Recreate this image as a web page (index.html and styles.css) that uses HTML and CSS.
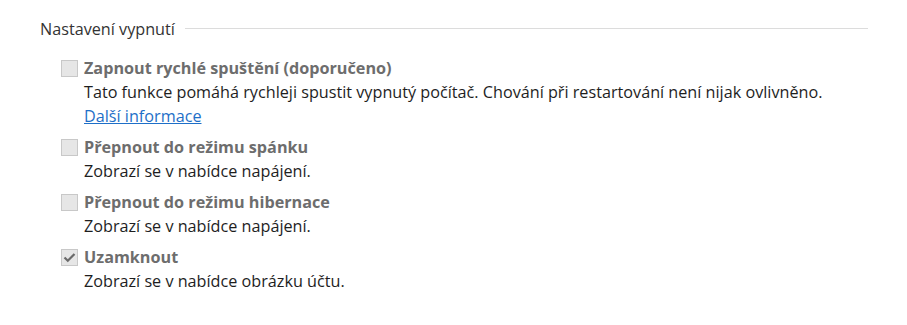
FILE: index.html
```html
<!DOCTYPE html>
<html lang="cs">
<head>
    <meta charset="UTF-8">
    <title>Nastavení vypnutí</title>
    <link rel="stylesheet" href="styles.css">
</head>
<body>
    <div class="group">
        <div class="group-head">
            <span class="group-title">Nastavení vypnutí</span>
            <span class="group-rule"></span>
        </div>

        <div class="option">
            <span class="box"></span>
            <div class="option-text">
                <div class="option-label">Zapnout rychlé spuštění (doporučeno)</div>
                <div class="option-desc">Tato funkce pomáhá rychleji spustit vypnutý počítač. Chování při restartování není nijak ovlivněno.</div>
                <a class="option-link" href="#">Další informace</a>
            </div>
        </div>

        <div class="option">
            <span class="box"></span>
            <div class="option-text">
                <div class="option-label">Přepnout do režimu spánku</div>
                <div class="option-desc">Zobrazí se v nabídce napájení.</div>
            </div>
        </div>

        <div class="option">
            <span class="box"></span>
            <div class="option-text">
                <div class="option-label">Přepnout do režimu hibernace</div>
                <div class="option-desc">Zobrazí se v nabídce napájení.</div>
            </div>
        </div>

        <div class="option">
            <span class="box checked">
                <svg width="13" height="11" viewBox="0 0 13 11">
                    <path d="M1.5 5.5 L4.8 8.8 L11.5 2" fill="none" stroke="#6a6a6a" stroke-width="2.2"/>
                </svg>
            </span>
            <div class="option-text">
                <div class="option-label">Uzamknout</div>
                <div class="option-desc">Zobrazí se v nabídce obrázku účtu.</div>
            </div>
        </div>
    </div>
</body>
</html>
```

FILE: styles.css
```css
* {
    margin: 0;
    padding: 0;
    box-sizing: border-box;
}

body {
    background: #ffffff;
    font-family: "Open Sans", "Noto Sans", sans-serif;
    font-size: 16.2px;
    color: #1e1e1e;
}

.group {
    width: 868px;
    padding: 16px 0 0 40px;
}

.group-head {
    display: flex;
    align-items: center;
    height: 26px;
    margin-bottom: 14px;
}

.group-title {
    color: #333333;
}

.group-rule {
    flex: 1;
    height: 1px;
    background: #dcdcdc;
    margin-left: 10px;
    margin-top: -2px;
}

.option {
    display: flex;
    padding-left: 21px;
    margin-bottom: 7px;
    line-height: 24px;
}

.box {
    width: 17px;
    height: 17px;
    border: 1px solid #c8c8c8;
    background: #e6e6e6;
    margin-top: 4px;
    margin-right: 6px;
    display: flex;
    align-items: center;
    justify-content: center;
    flex-shrink: 0;
}

.option-label {
    font-weight: bold;
    color: #6d6d6d;
}

.option-desc {
    color: #1e1e1e;
}

.option-link {
    color: #1e6fc8;
    text-decoration: underline;
    display: inline-block;
    line-height: 23px;
}
```
